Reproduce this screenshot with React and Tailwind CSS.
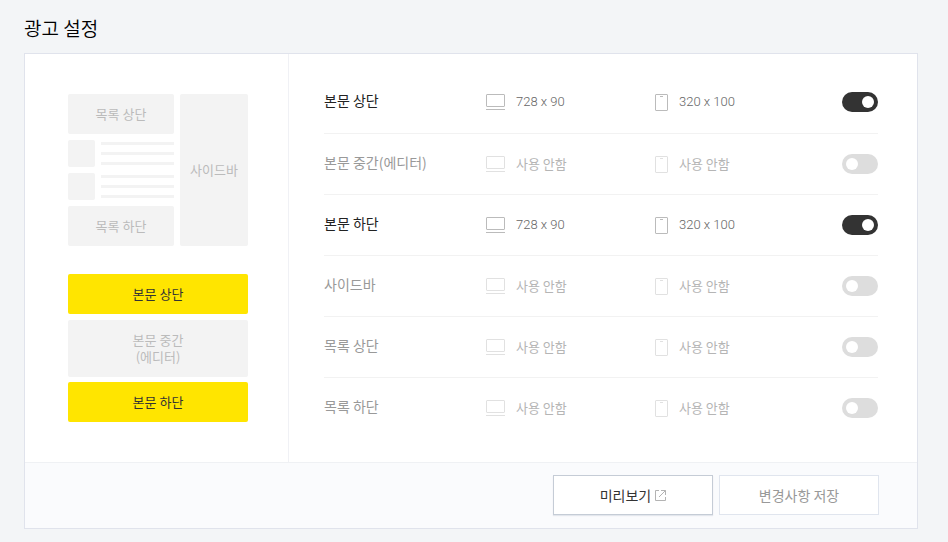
import { useState } from "react";
import clsx from "clsx";

const initialSlots = [
  { id: "bodyTop", name: "본문 상단", enabled: true },
  { id: "bodyMiddle", name: "본문 중간(에디터)", enabled: false },
  { id: "bodyBottom", name: "본문 하단", enabled: true },
  { id: "sidebar", name: "사이드바", enabled: false },
  { id: "listTop", name: "목록 상단", enabled: false },
  { id: "listBottom", name: "목록 하단", enabled: false },
];

const DesktopIcon = ({ className }) => (
  <svg width="19" height="16" viewBox="0 0 19 16" fill="none" stroke="currentColor" className={className}>
    <rect x="0.5" y="0.5" width="18" height="12" rx="0.5" />
    <path d="M0 15.5h19" />
  </svg>
);

const MobileIcon = ({ className }) => (
  <svg width="13" height="17" viewBox="0 0 13 17" fill="none" stroke="currentColor" className={className}>
    <rect x="0.5" y="0.5" width="12" height="16" rx="0.5" />
    <path d="M5 2.5h3" />
  </svg>
);

const NewWindowIcon = () => (
  <svg width="11" height="11" viewBox="0 0 11 11" fill="none" stroke="currentColor" className="text-[#b3b3b3]">
    <path d="M4 0.5H0.5v10h10V7" />
    <path d="M6 0.5h4.5V5" />
    <path d="M10.5 0.5L4 7" />
  </svg>
);

const PreviewBox = ({ active, className, children }) => (
  <div
    className={clsx(
      "flex items-center justify-center rounded-xs pb-0.5 text-center text-[13px] leading-[17px]",
      active ? "bg-[#ffe500] text-[#333]" : "bg-[#f3f3f3] text-[#bbb]",
      className
    )}
  >
    {children}
  </div>
);

const PreviewPost = () => (
  <div className="flex gap-1.5">
    <div className="size-[27px] rounded-xs bg-[#f3f3f3]" />
    <div className="flex flex-1 flex-col gap-[7px] pt-0.5">
      <div className="h-[3px] bg-[#f3f3f3]" />
      <div className="h-[3px] bg-[#f3f3f3]" />
      <div className="h-[3px] bg-[#f3f3f3]" />
    </div>
  </div>
);

const AdSize = ({ icon: Icon, size, enabled }) => (
  <div className="flex items-center">
    <Icon className={enabled ? "text-[#bbb]" : "text-[#e1e1e1]"} />
    {enabled ? (
      <span className="pl-[11px] font-[Roboto,sans-serif] text-[13px] leading-5 font-light text-[#666]">{size}</span>
    ) : (
      <span className="pl-[11px] text-[13px] leading-5 text-[#b5b5b5]">사용 안함</span>
    )}
  </div>
);

const App = () => {
  const [slots, setSlots] = useState(initialSlots);

  const isOn = (id) => slots.find((slot) => slot.id === id).enabled;

  const handleToggle = (id) => {
    setSlots((prev) =>
      prev.map((slot) => (slot.id === id ? { ...slot, enabled: !slot.enabled } : slot))
    );
  };

  return (
    <main className="min-h-screen bg-[#f3f5f7] pt-4 pr-[30px] pb-3 pl-6 font-['Noto_Sans_CJK_KR',sans-serif]">
      <h1 className="text-[19px] leading-6 font-[350] text-black">광고 설정</h1>

      <form
        className="mt-[13px] border border-[#e0e3ec] bg-white"
        onSubmit={(e) => e.preventDefault()}
      >
        <div className="flex">
          <div className="w-[264px] shrink-0 border-r border-[#f0f1f5] pt-10 pr-10 pb-10 pl-[43px]">
            <div className="flex gap-1.5">
              <div className="flex flex-1 flex-col gap-1.5">
                <PreviewBox active={isOn("listTop")} className="h-10">목록 상단</PreviewBox>
                <PreviewPost />
                <PreviewPost />
                <PreviewBox active={isOn("listBottom")} className="h-10">목록 하단</PreviewBox>
              </div>
              <PreviewBox active={isOn("sidebar")} className="w-[68px]">사이드바</PreviewBox>
            </div>
            <div className="mt-7">
              <PreviewBox active={isOn("bodyTop")} className="h-10">본문 상단</PreviewBox>
              <PreviewBox active={isOn("bodyMiddle")} className="mt-1.5 mb-[5px] h-[57px]">
                본문 중간
                <br />
                (에디터)
              </PreviewBox>
              <PreviewBox active={isOn("bodyBottom")} className="h-10">본문 하단</PreviewBox>
            </div>
          </div>

          <ul className="flex-1 pt-[17px] pr-[39px] pl-[35px]">
            {slots.map(({ id, name, enabled }) => (
              <li
                key={id}
                className="grid h-[61px] grid-cols-[162px_169px_1fr_36px] items-center border-b border-[#f2f2f2] first:h-[63px] last:h-[60px] last:border-b-0"
              >
                <label
                  htmlFor={id}
                  className={clsx("pb-1 text-[14px] leading-5", enabled ? "text-[#222]" : "text-[#999]")}
                >
                  {name}
                </label>
                <AdSize icon={DesktopIcon} size="728 x 90" enabled={enabled} />
                <AdSize icon={MobileIcon} size="320 x 100" enabled={enabled} />
                <input
                  type="checkbox"
                  id={id}
                  checked={enabled}
                  onChange={() => handleToggle(id)}
                  className="h-5 w-9 cursor-pointer appearance-none rounded-full bg-[#ddd] p-1 before:block before:size-3 before:rounded-full before:bg-white checked:bg-[#333] checked:before:translate-x-4"
                />
              </li>
            ))}
          </ul>
        </div>

        <div className="flex justify-end gap-1.5 border-t border-[#eff1f4] bg-[#fafbfd] pt-3 pr-[38px] pb-[13px]">
          <button
            type="button"
            className="flex h-10 w-40 cursor-pointer items-center justify-center gap-1 border border-[#c5ccd6] bg-white text-[14px] leading-5 text-[#333] shadow-[0_1px_1px_#e3e7ed]"
          >
            미리보기
            <NewWindowIcon />
          </button>
          <button
            type="submit"
            className="h-10 w-40 cursor-pointer border border-[#e0e5ee] bg-white text-[14px] leading-5 text-[#999]"
          >
            변경사항 저장
          </button>
        </div>
      </form>
    </main>
  );
};

export default App;
